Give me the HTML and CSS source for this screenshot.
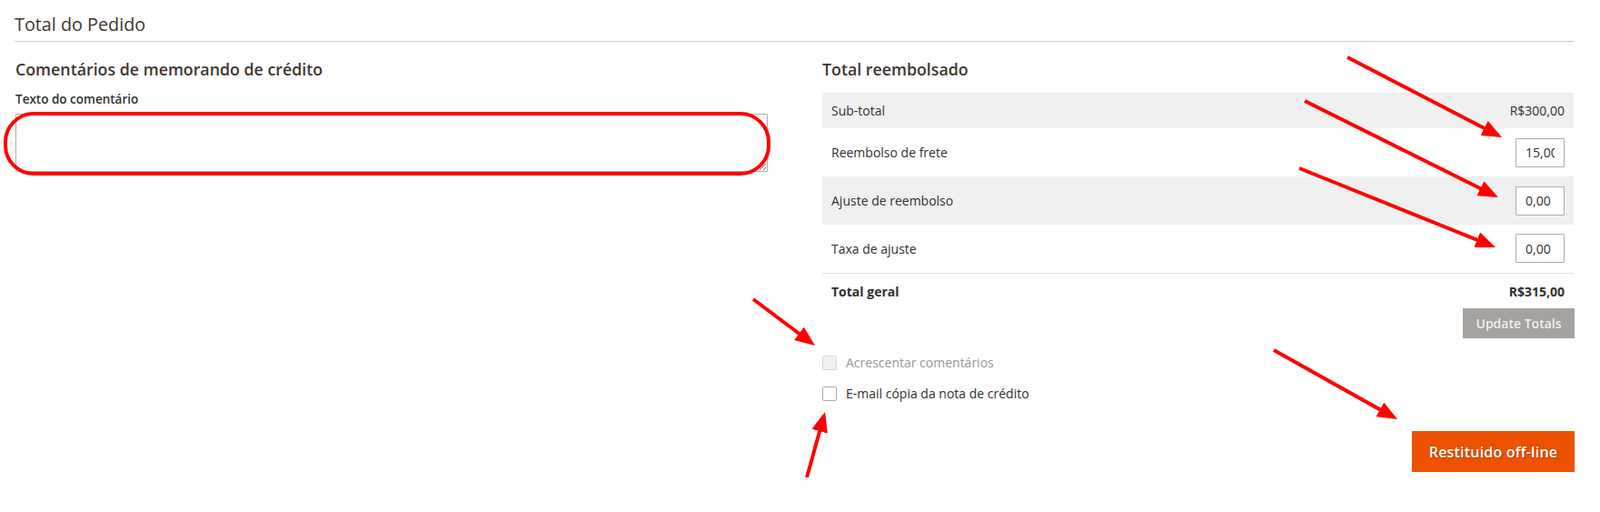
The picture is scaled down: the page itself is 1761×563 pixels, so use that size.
FILE: index.html
```html
<!DOCTYPE html>
<html lang="pt-BR">
<head>
<meta charset="utf-8">
<title>Total do Pedido</title>
<link rel="stylesheet" href="styles.css">
</head>
<body>
<div class="page">
  <h2 class="page-title">Total do Pedido</h2>
  <div class="cols">
    <section class="col">
      <h3 class="sec-title">Comentários de memorando de crédito</h3>
      <label class="field-label" for="comment">Texto do comentário</label>
      <textarea id="comment" class="comment"></textarea>
    </section>
    <section class="col">
      <h3 class="sec-title">Total reembolsado</h3>
      <table class="totals">
        <tbody>
          <tr class="odd row-sub"><td>Sub-total</td><td class="num">R$300,00</td></tr>
          <tr class="row-in"><td>Reembolso de frete</td><td class="num"><input class="amt" type="text" value="15,00"></td></tr>
          <tr class="odd row-in"><td>Ajuste de reembolso</td><td class="num"><input class="amt" type="text" value="0,00"></td></tr>
          <tr class="row-in last-in"><td>Taxa de ajuste</td><td class="num"><input class="amt" type="text" value="0,00"></td></tr>
          <tr class="grand"><td>Total geral</td><td class="num">R$315,00</td></tr>
        </tbody>
      </table>
      <div class="update-wrap"><button class="btn-update" type="button">Update Totals</button></div>
      <div class="checks">
        <label class="check disabled"><input type="checkbox" disabled><span>Acrescentar comentários</span></label>
        <label class="check"><input type="checkbox"><span>E-mail cópia da nota de crédito</span></label>
      </div>
      <div class="submit-wrap"><button class="btn-primary" type="button">Restituido off-line</button></div>
    </section>
  </div>

  <svg class="annot" width="1761" height="563" viewBox="0 0 1761 563" aria-hidden="true">
    <defs>
      <marker id="ah" markerUnits="userSpaceOnUse" markerWidth="22" markerHeight="18" refX="17" refY="9" orient="auto">
        <path d="M0,0 L22,9 L0,18 Z" fill="#ff0000"/>
      </marker>
    </defs>
    <rect x="6" y="125" width="840" height="66" rx="31" ry="31" fill="none" stroke="#ff0000" stroke-width="4"/>
    <g stroke="#ff0000" stroke-width="4" marker-end="url(#ah)">
      <line x1="1483" y1="63" x2="1648.6" y2="148.7"/>
      <line x1="1436" y1="111" x2="1644.5" y2="214.8"/>
      <line x1="1430" y1="185" x2="1641.4" y2="270.1"/>
      <line x1="829" y1="329" x2="893" y2="377"/>
      <line x1="1402" y1="385" x2="1533.6" y2="458.6"/>
      <line x1="888" y1="525" x2="906.7" y2="457.8"/>
    </g>
  </svg>
</div>
</body>
</html>
```

FILE: styles.css
```css
* { box-sizing: border-box; }
html, body { margin: 0; padding: 0; background: #fff; }
body {
  font-family: "Open Sans", "Liberation Sans", sans-serif;
  color: #303030;
  font-size: 14px;
}
.page {
  position: relative;
  width: 1761px;
  height: 563px;
  padding: 0 29px 0 17px;
  overflow: hidden;
}
.page-title {
  margin: 0 0 0 -1px;
  padding: 15px 0 6px 0;
  font-size: 19.8px;
  line-height: 24px;
  font-weight: 400;
  color: #41362f;
  border-bottom: 1px solid #cccccc;
}
.cols {
  display: grid;
  grid-template-columns: 827px 827px;
  column-gap: 61px;
}
.col { display: flex; flex-direction: column; }
.sec-title {
  margin: 19px 0 0 0;
  font-size: 17.8px;
  line-height: 22px;
  font-weight: 600;
  color: #41362f;
}
.field-label {
  margin-top: 12px;
  font-size: 13.5px;
  line-height: 20px;
  font-weight: 600;
  color: #303030;
}
.comment {
  margin-top: 6px;
  width: 828px;
  height: 64px;
  border: 1px solid #adadad;
  border-radius: 1px;
  font-family: inherit;
  font-size: 14px;
  padding: 6px 10px;
}
.totals {
  margin-top: 15px;
  width: 100%;
  border-collapse: collapse;
}
.totals td {
  padding: 0 10px;
  font-size: 14px;
  color: #303030;
  vertical-align: middle;
}
.totals .num { text-align: right; }
.totals .odd td { background: #f0f0f0; }
.row-sub td { height: 39px; }
.row-in td { height: 53px; }
.last-in td { border-bottom: 1px solid #e3e3e3; }
.grand td {
  height: 40px;
  padding-top: 1px;
  font-weight: 700;
}
.amt {
  width: 54px;
  height: 32px;
  border: 1px solid #adadad;
  border-radius: 1px;
  padding: 0 10px 0 10px;
  font-family: inherit;
  font-size: 14px;
  color: #303030;
  background: #fff;
  vertical-align: middle;
}
.update-wrap { display: flex; justify-content: flex-end; margin-top: -1px; }
.btn-update {
  height: 33px;
  width: 123px;
  margin-right: -1px;
  border: none;
  background: #a6a29f;
  color: #f5f5f5;
  font-family: inherit;
  font-size: 14px;
  font-weight: 600;
  padding: 0;
  white-space: nowrap;
  text-shadow: 0 0 1px rgba(0,0,0,0.15);
}
.checks {
  display: flex;
  flex-direction: column;
  gap: 14px;
  margin-top: 17px;
}
.check {
  display: flex;
  align-items: center;
  gap: 10px;
  font-size: 14px;
  line-height: 20px;
  color: #303030;
}
.check input {
  appearance: none;
  -webkit-appearance: none;
  margin: 0;
  width: 16px;
  height: 16px;
  border: 1px solid #adadad;
  border-radius: 2px;
  background: #fff;
}
.check.disabled { color: #999999; }
.check.disabled input { background: #f0f0f0; border-color: #dadada; }
.submit-wrap { display: flex; justify-content: flex-end; margin-top: 31px; }
.btn-primary {
  height: 45px;
  width: 179px;
  margin-right: -1px;
  border: none;
  background: #eb5202;
  color: #ffffff;
  font-family: inherit;
  font-size: 16px;
  font-weight: 600;
  letter-spacing: 0.2px;
  white-space: nowrap;
  text-shadow: 1px 1px 1px rgba(0,0,0,0.25);
  padding: 0;
}
.annot {
  position: absolute;
  left: 0;
  top: 0;
  pointer-events: none;
}
```
